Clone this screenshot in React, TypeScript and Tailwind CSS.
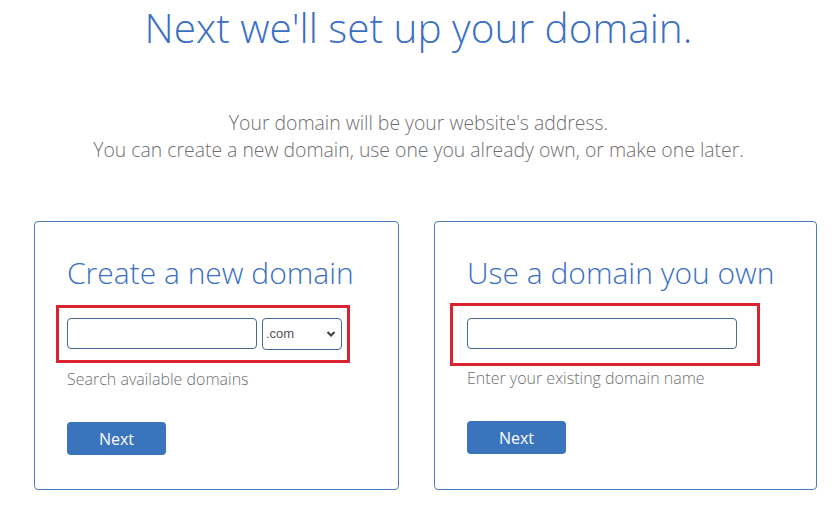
import React from "react";

const font = { fontFamily: '"Open Sans", "Liberation Sans", sans-serif' };

export default function App() {
  return (
    <div className="w-[837px] h-[508px] bg-white overflow-hidden font-light" style={font}>
      <h1 className="text-center text-[40.5px] leading-[55px] font-light text-[#3b6fc4] whitespace-nowrap">
        Next we'll set up your domain.
      </h1>
      <div className="mt-[54px] text-center text-[19.4px] leading-[27px] font-light text-[#6f6f6f] whitespace-nowrap">
        <p>Your domain will be your website's address.</p>
        <p>You can create a new domain, use one you already own, or make one later.</p>
      </div>
      <div className="mt-[58px] ml-[34px] flex gap-[35px]">
        <div className="relative w-[365px] h-[269px] border border-[#4a7cc2] rounded-[4px] pl-[32px] pt-[33px]">
          <h2 className="text-[30px] leading-[36px] font-light text-[#3b6fc4] whitespace-nowrap">Create a new domain</h2>
          <div className="mt-[27px] flex gap-[5px] items-start">
            <input className="w-[190px] h-[31px] border border-[#45679a] rounded-[4px] outline-none" />
            <div className="relative w-[80px] h-[32px] border border-[#45679a] rounded-[4px] flex items-center pl-[3px]">
              <span className="text-[13px] text-[#555] font-normal" style={{ fontFamily: '"Liberation Sans", Arial, sans-serif' }}>.com</span>
              <svg className="absolute right-[5px] top-[11px]" width="10" height="8" viewBox="0 0 10 8">
                <path d="M1.5 2 L5 5.5 L8.5 2" stroke="#444" strokeWidth="2.2" fill="none" />
              </svg>
            </div>
          </div>
          <p className="mt-[17px] text-[16px] leading-[24px] font-light text-[#6f6f6f]">Search available domains</p>
          <button className="mt-[31px] w-[99px] h-[33px] rounded-[4px] bg-[#3a74bd] text-white text-[16px] font-normal">Next</button>
          <div className="absolute left-[21px] top-[83px] w-[294px] h-[58px] border-[3px] border-[#d9232f]" />
        </div>
        <div className="relative w-[383px] h-[269px] border border-[#4a7cc2] rounded-[4px] pl-[32px] pt-[33px]">
          <h2 className="text-[30px] leading-[36px] font-light text-[#3b6fc4] whitespace-nowrap">Use a domain you own</h2>
          <div className="mt-[27px] flex">
            <input className="w-[270px] h-[31px] border border-[#45679a] rounded-[4px] outline-none" />
          </div>
          <p className="mt-[17px] text-[16px] leading-[24px] font-light text-[#6f6f6f]">Enter your existing domain name</p>
          <button className="mt-[31px] w-[99px] h-[33px] rounded-[4px] bg-[#3a74bd] text-white text-[16px] font-normal">Next</button>
          <div className="absolute left-[15px] top-[81px] w-[310px] h-[63px] border-[3px] border-[#d9232f]" />
        </div>
      </div>
    </div>
  );
}
